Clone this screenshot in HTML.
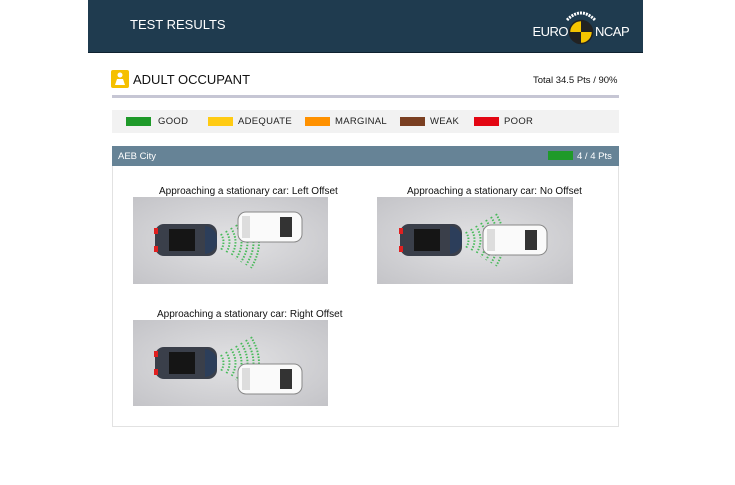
<!DOCTYPE html><html><head><style>
body{margin:0;width:735px;height:485px;background:#fff;font-family:"Liberation Sans",sans-serif;position:relative;overflow:hidden}
.a{position:absolute}
.hdr{left:88px;top:0;width:555px;height:52px;background:#1f3b4f;border-bottom:1px solid #0f2230}
.cap{font-size:10px;color:#111;white-space:nowrap}
.lg{top:110px;left:112px;width:507px;height:23px;background:#f2f2f2}
.sw{position:absolute;top:7px;width:25px;height:9px}
.lt{position:absolute;top:6px;font-size:9.5px;color:#222;letter-spacing:.3px}
</style></head><body>
<div class="a hdr"></div>
<div class="a" style="left:130px;top:17px;color:#fff;font-size:13px">TEST RESULTS</div>
<div class="a" style="left:528px;width:40px;text-align:right;top:24px;color:#fff;font-size:13px;letter-spacing:-.5px">EURO</div>
<div class="a" style="left:595px;top:24px;color:#fff;font-size:13px;letter-spacing:-.5px">NCAP</div>
<svg class="a" style="left:563px;top:8px" width="36" height="40"><circle cx="18" cy="24" r="11.5" fill="#f5c400" stroke="#222" stroke-width="1.5"/><path d="M18 12.5A11.5 11.5 0 0 1 29.5 24H18Z M18 35.5A11.5 11.5 0 0 1 6.5 24H18Z" fill="#222"/><path d="M4 12Q18 -2 32 12" stroke="#fff" stroke-width="3" fill="none" stroke-dasharray="2 1"/></svg>
<div class="a" style="left:111px;top:70px;width:18px;height:18px;background:#f5c000;border-radius:2px"></div>
<svg class="a" style="left:111px;top:70px" width="18" height="18"><circle cx="9" cy="5" r="2.5" fill="#fff"/><path d="M4 15L6 9H12L14 15Z" fill="#fff"/></svg>
<div class="a" style="left:133px;top:72px;font-size:13px;color:#111">ADULT OCCUPANT</div>
<div class="a" style="left:533px;top:75px;font-size:9.5px;color:#111">Total 34.5 Pts / 90%</div>
<div class="a" style="left:112px;top:95px;width:507px;height:3px;background:#c6c6d4"></div>
<div class="a lg">
<div class="sw" style="left:14px;background:#1f9a2a"></div><div class="lt" style="left:46px">GOOD</div>
<div class="sw" style="left:96px;background:#ffcb13"></div><div class="lt" style="left:126px">ADEQUATE</div>
<div class="sw" style="left:193px;background:#ff9100"></div><div class="lt" style="left:223px">MARGINAL</div>
<div class="sw" style="left:288px;background:#7a3f21"></div><div class="lt" style="left:318px">WEAK</div>
<div class="sw" style="left:362px;background:#e30613"></div><div class="lt" style="left:392px">POOR</div>
</div>
<div class="a" style="left:112px;top:146px;width:507px;height:281px;border:1px solid #e2e2e2;box-sizing:border-box"></div>
<div class="a" style="left:112px;top:146px;width:507px;height:20px;background:#668396"></div>
<div class="a" style="left:118px;top:151px;font-size:9.5px;color:#fff">AEB City</div>
<div class="a" style="left:548px;top:151px;width:25px;height:9px;background:#1f9a2a"></div>
<div class="a" style="left:577px;top:151px;font-size:9.5px;color:#fff">4 / 4 Pts</div>
<div class="a cap" style="left:159px;top:186px">Approaching a stationary car: Left Offset</div>
<div class="a cap" style="left:407px;top:186px">Approaching a stationary car: No Offset</div>
<div class="a cap" style="left:157px;top:309px">Approaching a stationary car: Right Offset</div>
<svg width="0" height="0" style="position:absolute"><defs>
<radialGradient id="bg" cx="50%" cy="50%" r="70%"><stop offset="0" stop-color="#e2e2e4"/><stop offset="1" stop-color="#c4c4c8"/></radialGradient>
<g id="dk"><rect x="0" y="0" width="62" height="32" rx="9" fill="#3a3f4a"/><rect x="14" y="5" width="26" height="22" fill="#151515"/><rect x="-1" y="4" width="4" height="6" fill="#e02020"/><rect x="-1" y="22" width="4" height="6" fill="#e02020"/><path d="M50 2Q62 4 62 16Q62 28 50 30" fill="#2c3e5a"/></g>
<g id="wt"><rect x="0" y="0" width="64" height="30" rx="8" fill="#fafafa" stroke="#888"/><rect x="42" y="5" width="12" height="20" fill="#333"/><rect x="4" y="4" width="8" height="22" fill="#ddd"/></g>
<g id="wv" fill="none" stroke="#2fb544" stroke-width="2" stroke-dasharray="1.5 1.5" opacity=".85"><path d="M6 -8Q11 0 6 8"/><path d="M11 -11Q18 0 11 11"/><path d="M16 -14Q25 0 16 14"/><path d="M21 -17Q32 0 21 17"/><path d="M26 -20Q39 0 26 20"/><path d="M31 -23Q46 0 31 23"/><path d="M36 -26Q52 0 36 26"/></g>
</defs></svg>
<svg class="a" style="left:133px;top:197px" width="195" height="87"><rect width="195" height="87" fill="url(#bg)"/><use href="#dk" x="22" y="27"/><use href="#wv" x="82" y="45"/><use href="#wt" x="105" y="15"/></svg>
<svg class="a" style="left:377px;top:197px" width="196" height="87"><rect width="196" height="87" fill="url(#bg)"/><use href="#dk" x="23" y="27"/><use href="#wv" x="83" y="43"/><use href="#wt" x="106" y="28"/></svg>
<svg class="a" style="left:133px;top:320px" width="195" height="86"><rect width="195" height="86" fill="url(#bg)"/><use href="#dk" x="22" y="27"/><use href="#wv" x="82" y="43"/><use href="#wt" x="105" y="44"/></svg>
</body></html>
